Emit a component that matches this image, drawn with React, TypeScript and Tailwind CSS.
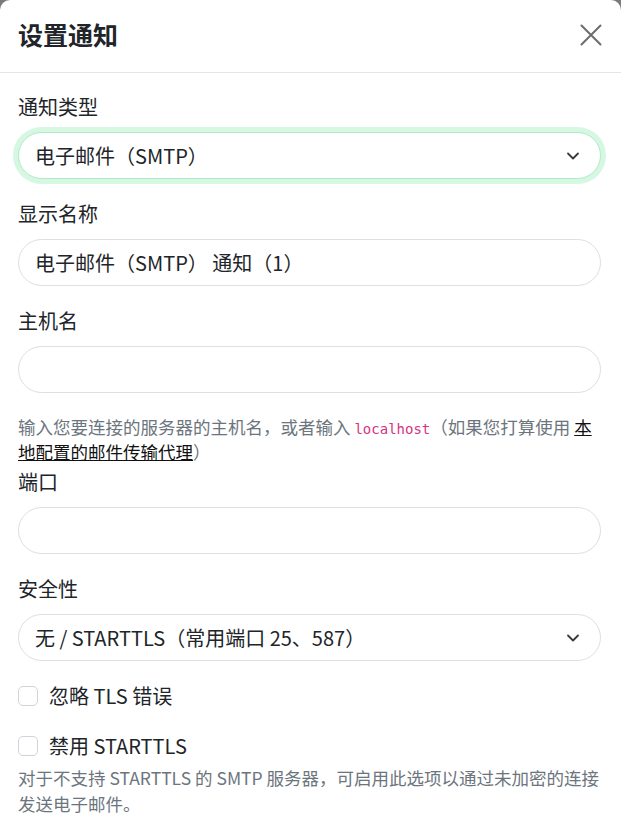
import React from "react";

const font = { fontFamily: '"Noto Sans CJK SC", "Noto Sans", sans-serif' };

function Chevron() {
  return (
    <svg width="16" height="12" viewBox="0 0 16 12" className="absolute right-[19px] top-1/2 -translate-y-1/2">
      <path d="M3 3.5 L8 8.5 L13 3.5" fill="none" stroke="#343a40" strokeWidth="1.8" strokeLinecap="round" strokeLinejoin="round" />
    </svg>
  );
}

function Label({ children }: { children: React.ReactNode }) {
  return <div className="text-[20px] leading-[30px] text-[#212529] mb-[10px]">{children}</div>;
}

function Select({ value, focused }: { value: string; focused?: boolean }) {
  return (
    <div
      className={
        "relative h-[47px] rounded-full bg-white flex items-center pl-[16px] text-[20px] text-[#212529] border " +
        (focused ? "border-[#aeeac6] shadow-[0_0_0_5px_#d6f7e2]" : "border-[#dcdfe3]")
      }
    >
      {value}
      <Chevron />
    </div>
  );
}

function Input({ value }: { value?: string }) {
  return (
    <div className="h-[47px] rounded-full bg-white border border-[#dcdfe3] flex items-center pl-[16px] text-[20px] text-[#212529]">
      {value}
    </div>
  );
}

function Check({ label }: { label: string }) {
  return (
    <div className="flex items-center h-[30px]">
      <div className="w-[20px] h-[20px] rounded-[5px] border border-[#ced4da] bg-white" />
      <span className="ml-[11px] text-[20px] text-[#212529]">{label}</span>
    </div>
  );
}

export default function App() {
  return (
    <div className="min-h-[830px] w-[621px] bg-[#7a7a7a]" style={font}>
      <div className="min-h-[830px] bg-white rounded-t-[10px] overflow-hidden">
        <div className="h-[73px] border-b border-[#e2e4e7] flex items-center justify-between pl-[18px] pr-[19px]">
          <div className="text-[25px] leading-[30px] font-bold text-[#212529] -mt-[4px]">设置通知</div>
          <svg width="22" height="22" viewBox="0 0 22 22" className="-mt-[2px]">
            <path d="M1.5 1.5 L20.5 20.5 M20.5 1.5 L1.5 20.5" stroke="#6c6c6c" strokeWidth="2" strokeLinecap="round" />
          </svg>
        </div>
        <div className="pl-[18px] pr-[20px] pt-[19px]">
          <Label>通知类型</Label>
          <Select value="电子邮件（SMTP）" focused />
          <div className="h-[20px]" />
          <Label>显示名称</Label>
          <Input value="电子邮件（SMTP） 通知（1）" />
          <div className="h-[20px]" />
          <Label>主机名</Label>
          <Input />
          <div className="mt-[21px] mb-[3px] text-[17.5px] leading-[25px] text-[#6c757d]">
            输入您要连接的服务器的主机名，或者输入{" "}
            <code className="text-[14px] leading-none text-[#d63384]" style={{ fontFamily: '"DejaVu Sans Mono", "Liberation Mono", monospace' }}>localhost</code>
            （如果您打算使用{" "}
            <a className="text-[#111] underline">本地配置的邮件传输代理</a>）
          </div>
          <Label>端口</Label>
          <Input />
          <div className="h-[20px]" />
          <Label>安全性</Label>
          <Select value="无 / STARTTLS（常用端口 25、587）" />
          <div className="h-[20px]" />
          <Check label="忽略 TLS 错误" />
          <div className="h-[20px]" />
          <Check label="禁用 STARTTLS" />
          <div className="mt-[4px] text-[17.5px] leading-[26px] text-[#6c757d]">
            对于不支持 STARTTLS 的 SMTP 服务器，可启用此选项以通过未加密的连接发送电子邮件。
          </div>
        </div>
      </div>
    </div>
  );
}
